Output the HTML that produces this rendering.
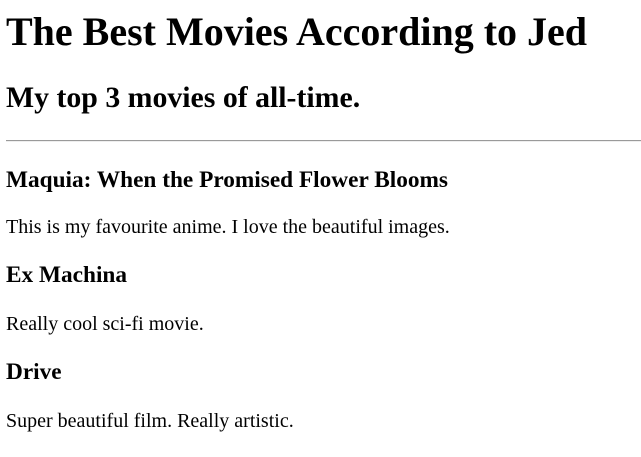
<!DOCTYPE html>
<html><head><meta charset="utf-8"><style>
body{margin:0;width:641px;height:457px;background:#fff;font-family:"Liberation Serif","Times New Roman",serif;color:#000;position:relative;overflow:hidden}
div{position:absolute;left:6px;line-height:1;white-space:nowrap}
.h1{font-size:40px;font-weight:bold}
.h2{font-size:29.8px;font-weight:bold}
.h4{font-size:23.3px;font-weight:bold}
.p{font-size:20px}
hr{position:absolute;left:6px;right:0;top:140px;margin:0;border:0;border-top:1px solid #9a9a9a;border-bottom:1px solid #eee;height:0}
</style></head><body>
<div class="h1" style="top:12px">The Best Movies According to Jed</div>
<div class="h2" style="top:83px">My top 3 movies of all-time.</div>
<hr>
<div class="h4" style="top:169px">Maquia: When the Promised Flower Blooms</div>
<div class="p" style="top:217px">This is my favourite anime. I love the beautiful images.</div>
<div class="h4" style="top:264px">Ex Machina</div>
<div class="p" style="top:314px">Really cool sci-fi movie.</div>
<div class="h4" style="top:361px">Drive</div>
<div class="p" style="top:411px">Super beautiful film. Really artistic.</div>
</body></html>
